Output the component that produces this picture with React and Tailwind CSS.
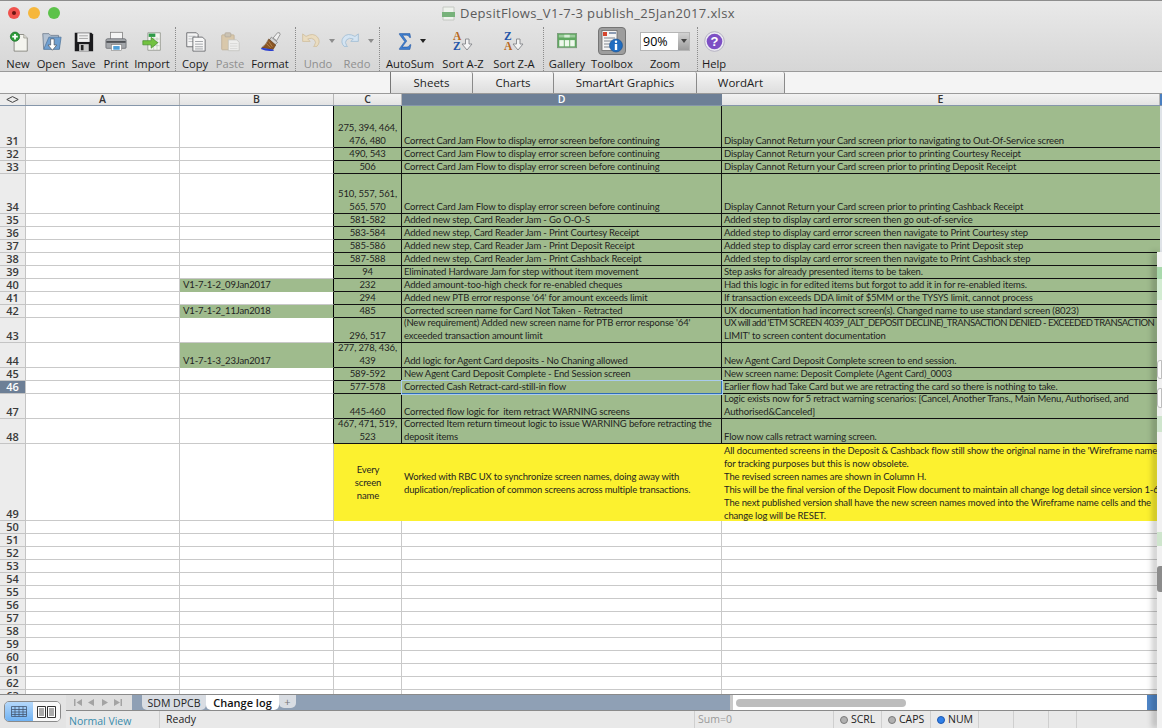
import React from "react";

const NewIcon = () => (
  <svg width="21" height="21" viewBox="0 0 24 24">
    <path d="M7 4h11l4 4v15H7z" fill="#f4f4ee" stroke="#77776f" strokeWidth=".9" />
    <path d="M18 4v4h4" fill="#dcdcd4" stroke="#88887f" strokeWidth=".7" />
    <circle cx="8" cy="6.500" r="5.300" fill="#2b9a38" stroke="#1d6f2a" strokeWidth=".8" />
    <path d="M8 3.300v6.400M4.800 6.500h6.400" stroke="#fff" strokeWidth="2" />
  </svg>
);
const OpenIcon = () => (
  <svg width="21" height="21" viewBox="0 0 24 24">
    <path d="M2 3h7l2 2h9l1 15H3z" fill="#b4c2d2" stroke="#5f6f82" strokeWidth=".8" />
    <path d="M9 7h14l-2 14H3z" fill="#6f9fd0" stroke="#41688f" strokeWidth=".7" />
    <path d="M11 9h4v7h3l-5 6-5-6h3z" fill="#fff" stroke="#50555c" strokeWidth=".8" />
  </svg>
);
const SaveIcon = () => (
  <svg width="21" height="21" viewBox="0 0 24 24">
    <path d="M2 2h19l2 2v19H2z" fill="#1a1a1d" />
    <rect x="5" y="2.500" width="14" height="10" fill="#f1f1f1" />
    <path d="M7 5.500h10M7 8.500h10" stroke="#9a9a9a" strokeWidth="1" />
    <rect x="7" y="15" width="11" height="8" fill="#c8c8c8" />
    <rect x="9" y="16" width="3" height="6" fill="#222" />
  </svg>
);
const PrintIcon = () => (
  <svg width="22" height="22" viewBox="0 0 24 24">
    <rect x="6" y="2.500" width="13" height="8" fill="#f5f5f5" stroke="#777" strokeWidth=".8" />
    <path d="M3 9.500h18a2 2 0 0 1 2 1.500v8a1 1 0 0 1-1 1H2a1 1 0 0 1-1-1v-8a2 2 0 0 1 2-1.500z" fill="#a3a6aa" stroke="#63666b" strokeWidth=".8" />
    <rect x="1.500" y="12" width="21" height="2" fill="#4d5054" />
    <rect x="7" y="16" width="11" height="6.500" fill="#fff" stroke="#777" strokeWidth=".6" />
    <rect x="9" y="17.500" width="7" height="4" fill="#4f9fd8" />
  </svg>
);
const ImportIcon = () => (
  <svg width="20" height="21" viewBox="0 0 24 24">
    <path d="M7 1.500h15v21H7z" fill="#f5f6f0" stroke="#7d8277" strokeWidth=".8" />
    <rect x="8" y="2.500" width="8" height="4" fill="#2f9a48" />
    <path d="M10 9h11M10 13h11M10 17h11M14 7v15M18 7v15" stroke="#a9b6a4" strokeWidth=".6" />
    <path d="M1 11h10V7l8 6.500-8 6.500v-4H1z" fill="#73c23f" stroke="#3e8a25" strokeWidth=".8" />
  </svg>
);
const CopyIcon = () => (
  <svg width="21" height="21" viewBox="0 0 24 24">
    <path d="M2 2h11l2 2v14H2z" fill="#f4f4f4" stroke="#55585c" strokeWidth=".9" />
    <path d="M4 6h8M4 9h8M4 12h8" stroke="#a5a8ac" strokeWidth=".8" />
    <path d="M9 7h11l3 3v13H9z" fill="#f7f7f7" stroke="#55585c" strokeWidth=".9" />
    <path d="M11.500 12h9M11.500 15h9M11.500 18h9M11.500 20.500h9" stroke="#8e9196" strokeWidth=".9" />
  </svg>
);
const PasteIcon = () => (
  <svg width="20" height="21" viewBox="0 0 24 24">
    <rect x="2" y="4" width="15" height="18" rx="1" fill="#d9c8ab" stroke="#b9a98f" strokeWidth=".8" />
    <rect x="6" y="1.500" width="7" height="5" rx="1" fill="#cbc3b4" stroke="#aaa294" strokeWidth=".7" />
    <path d="M10 10h10l3 3v10H10z" fill="#eeeeec" stroke="#bcbcb8" strokeWidth=".8" />
    <path d="M12 14.500h9M12 17.500h9M12 20.500h9" stroke="#cfcfcb" strokeWidth=".8" />
  </svg>
);
const BrushIcon = () => (
  <svg width="21" height="21" viewBox="0 0 24 24">
    <path d="M15 8l5-6q3-1 3 2l-4 7z" fill="#eeeeee" stroke="#777" strokeWidth=".8" />
    <path d="M13 7l7 6-3 3-6-6z" fill="#d5d5d5" stroke="#666" strokeWidth=".7" />
    <path d="M10 9l8 7-3 5-13-2q5-3 8-10z" fill="#8a5524" stroke="#5d3812" strokeWidth=".6" />
    <path d="M2 19l13 2 1 1.500q-8 1.500-15-2z" fill="#2b3fd0" />
    <path d="M7 14l5 5M10 12l4 6" stroke="#c59a5e" strokeWidth=".8" />
  </svg>
);
const UndoIcon = ({ flip, color, edge }) => (
  <svg width="20" height="16" viewBox="0 0 24 19" style={flip ? { transform: "scaleX(-1)" } : undefined}>
    <path d="M2 1v9h9L8 7q5-2 8 1 3 3 0 7l-1 1h4q5-5 1-11-5-6-14-1z" fill={color} stroke={edge} strokeWidth=".9" />
  </svg>
);
const Sigma = () => (
  <svg width="14" height="19" viewBox="0 0 20 24" preserveAspectRatio="none">
    <path d="M2 2h15l1 5h-1.500q-1-3-4-3H6.500l6 7.500L6 19h7q3 0 4-3h1.500L17 22H2v-1l7.500-9L2 3z" fill="#3f7fd0" stroke="#1c4f9c" strokeWidth=".7" />
  </svg>
);
const SortIcon = ({ top, bottom, topColor, bottomColor }) => (
  <svg width="22" height="20" viewBox="0 0 22 20" className="overflow-visible">
    <text x="1" y="8.500" fontFamily="'Liberation Serif',serif" fontWeight="700" fontSize="11.500" fill={topColor}>{top}</text>
    <text x="1" y="19" fontFamily="'Liberation Serif',serif" fontWeight="700" fontSize="11.500" fill={bottomColor}>{bottom}</text>
    <path d="M13.500 8h3.500v5h3l-5 6-5-6h3.500z" fill="#f4f4f4" stroke="#85878a" strokeWidth=".9" />
  </svg>
);
const GalleryIcon = () => (
  <svg width="20" height="16" viewBox="0 0 22 18" preserveAspectRatio="none">
    <rect x=".5" y=".5" width="21" height="16" fill="#5fa860" stroke="#7b9b7b" />
    <rect x="2" y="2" width="18" height="3" fill="#9ccb9c" />
    <rect x="8" y="2" width="6" height="3" fill="#d8edd8" />
    <rect x="2.500" y="8" width="5" height="7" fill="#eef8ec" />
    <rect x="8.500" y="8" width="5" height="7" fill="#eef8ec" />
    <rect x="14.500" y="8" width="5" height="7" fill="#eef8ec" />
  </svg>
);
const ToolboxIcon = () => (
  <svg width="22" height="23" viewBox="0 0 22 23">
    <rect x="1" y=".5" width="15" height="20" fill="#f4f4f4" stroke="#6b6b6b" strokeWidth=".8" />
    <rect x="2" y="2" width="4" height="4" fill="#d6452e" />
    <rect x="8" y="2" width="7" height="2" fill="#8c9cb4" />
    <path d="M3 8h11M3 11h8M3 14h8M3 17h8" stroke="#80868e" strokeWidth="1.200" />
    <circle cx="15" cy="15.500" r="6.500" fill="#1f6cc0" stroke="#144d8f" strokeWidth=".6" />
    <circle cx="15" cy="11.800" r="1.200" fill="#fff" />
    <rect x="13.800" y="14" width="2.400" height="6" fill="#fff" />
  </svg>
);
const HelpIcon = () => (
  <svg width="21" height="21" viewBox="0 0 21 21">
    <circle cx="10.500" cy="10.500" r="9.800" fill="#ecebf2" stroke="#a8a5b8" strokeWidth=".8" />
    <circle cx="10.500" cy="10.500" r="7.800" fill="#7d4fc4" />
    <text x="10.500" y="15.300" textAnchor="middle" fontFamily="'Liberation Sans',sans-serif" fontWeight="700" fontSize="13" fill="#fff">?</text>
  </svg>
);
const Caret = ({ className }) => (
  <span className={`w-0 h-0 border-x-[3px] border-x-transparent border-t-[4px] ${className}`} />
);

const Sep = () => <div className="w-[6px] h-[44px] flex justify-center"><div className="border-l border-dotted border-[#8b8b8b]" /></div>;

const Label = ({ dim, children }) => (
  <span className={`mt-[2px] text-[11.2px] leading-[14px] whitespace-nowrap ${dim ? "text-[#8f8f8f]" : "text-[#1b1b1b]"}`}>{children}</span>
);

const Tool = ({ w, label, dim, children }) => (
  <div className={`${w} h-[44px] flex flex-col items-center shrink-0`}>
    <div className="h-[28px] flex items-center justify-center">{children}</div>
    <Label dim={dim}>{label}</Label>
  </div>
);

const Toolbar = () => (
  <div className="h-[72px] shrink-0 bg-gradient-to-b from-[#e9e9e9] to-[#d6d6d6] border-t border-[#8d8d8d] border-b border-b-[#9a9a9a] flex flex-col font-['Open_Sans',sans-serif]">
    <div className="h-[24px] flex items-center shrink-0">
      <div className="flex gap-[8px] pl-[8px]">
        <span className="w-3 h-3 rounded-full bg-[#f0524d] flex items-center justify-center"><span className="w-1 h-1 rounded-full bg-[#6b1512]" /></span>
        <span className="w-3 h-3 rounded-full bg-[#f6b73c]" />
        <span className="w-3 h-3 rounded-full bg-[#5cc24a]" />
      </div>
      <div className="flex-1 flex items-center justify-center gap-[4px] pr-[46px]">
        <svg width="15" height="15" viewBox="0 0 15 15"><path d="M2 1h11v13H2z" fill="#eef2ec" stroke="#c4c8c2" /><rect x="1" y="6" width="13" height="5" fill="#77b27a" /></svg>
        <span className="text-[13px] leading-4 text-[#5b5b5b] tracking-[0.35px]">DepsitFlows_V1-7-3 publish_25Jan2017.xlsx</span>
      </div>
    </div>
    <div className="flex items-start pl-px pt-[2px]">
      <Tool w="w-[34px]" label="New"><NewIcon /></Tool>
      <Tool w="w-[32px]" label="Open"><OpenIcon /></Tool>
      <Tool w="w-[33px]" label="Save"><SaveIcon /></Tool>
      <Tool w="w-[32px]" label="Print"><PrintIcon /></Tool>
      <Tool w="w-[40px]" label="Import"><ImportIcon /></Tool>
      <Sep />
      <Tool w="w-[34px]" label="Copy"><CopyIcon /></Tool>
      <Tool w="w-[36px]" label="Paste" dim><PasteIcon /></Tool>
      <Tool w="w-[44px]" label="Format"><BrushIcon /></Tool>
      <Sep />
      <Tool w="w-[40px]" label="Undo" dim>
        <div className="flex items-center gap-[8px]"><UndoIcon color="#eadcc0" edge="#cdbb98" /><Caret className="border-t-[#8d8d8d]" /></div>
      </Tool>
      <Tool w="w-[38px]" label="Redo" dim>
        <div className="flex items-center gap-[8px]"><UndoIcon flip color="#d4e4f2" edge="#9bb9d2" /><Caret className="border-t-[#8d8d8d]" /></div>
      </Tool>
      <Sep />
      <Tool w="w-[56px]" label="AutoSum">
        <div className="flex items-center gap-[8px] ml-[4px]"><Sigma /><Caret className="border-t-[#222]" /></div>
      </Tool>
      <Tool w="w-[50px]" label="Sort A-Z"><SortIcon top="A" bottom="Z" topColor="#b8691d" bottomColor="#2455a8" /></Tool>
      <Tool w="w-[52px]" label="Sort Z-A"><SortIcon top="Z" bottom="A" topColor="#2455a8" bottomColor="#b8691d" /></Tool>
      <Sep />
      <Tool w="w-[42px]" label="Gallery"><GalleryIcon /></Tool>
      <div className="w-[48px] h-[44px] flex flex-col items-center shrink-0">
        <div className="w-[28px] h-[28px] rounded-[4px] bg-[#9d9d9d] border border-[#757575] flex items-center justify-center"><ToolboxIcon /></div>
        <Label>Toolbox</Label>
      </div>
      <div className="w-[58px] h-[44px] flex flex-col items-center shrink-0">
        <div className="h-[28px] flex items-center">
          <div className="w-[50px] h-[19px] flex border border-[#b5b5b5]">
            <span className="w-[37px] bg-white text-[12.5px] leading-[17px] pl-[2px] text-black">90%</span>
            <span className="flex-1 bg-gradient-to-b from-[#d2d2d2] to-[#9d9d9d] flex items-center justify-center"><Caret className="border-t-[#444]" /></span>
          </div>
        </div>
        <Label>Zoom</Label>
      </div>
      <Sep />
      <Tool w="w-[28px]" label="Help"><HelpIcon /></Tool>
    </div>
  </div>
);

const RibbonTab = ({ w, label }) => (
  <div className={`${w} h-full border-r border-[#8a8a8a] bg-gradient-to-b from-[#f6f6f6] via-[#e9e9e9] to-[#dedede] flex items-center justify-center pt-[1px] text-[11.5px] text-[#1d1d1d] shrink-0 rounded-t-[2px]`}>{label}</div>
);

const Ribbon = () => (
  <div className="h-[22px] flex bg-[#f4f4f4] font-['Open_Sans',sans-serif] border-b border-[#9a9a9a] shrink-0">
    <div className="w-[391px] shrink-0 border-r border-[#777]" />
    <RibbonTab w="w-[82px]" label="Sheets" />
    <RibbonTab w="w-[81px]" label="Charts" />
    <RibbonTab w="w-[143px]" label="SmartArt Graphics" />
    <RibbonTab w="w-[88px]" label="WordArt" />
  </div>
);

const ColHead = ({ w, label, on }) => (
  <div className={`${w} shrink-0 h-full flex items-center justify-center text-[10.5px] leading-[11px] font-semibold border-r ${on ? "bg-[#6d7f96] text-white border-[#6d7f96]" : "bg-gradient-to-b from-[#f2f2f2] to-[#e3e3e3] text-[#333] border-[#b6b6b6]"}`}>{label}</div>
);

const ColumnHeader = () => (
  <div className="h-[12px] flex shrink-0 border-b border-[#8596aa] font-['Open_Sans',sans-serif]">
    <div className="w-[26px] shrink-0 h-full bg-[#ececec] border-r border-[#b6b6b6] flex items-center justify-center">
      <svg width="13" height="7" viewBox="0 0 13 7"><path d="M.8 3.500 6.500.6l5.700 2.900-5.700 2.900z" fill="none" stroke="#444" strokeWidth="1" /></svg>
    </div>
    <ColHead w="w-[154px]" label="A" />
    <ColHead w="w-[154px]" label="B" />
    <ColHead w="w-[68px]" label="C" />
    <ColHead w="w-[320px]" label="D" on />
    <ColHead w="w-[438px]" label="E" />
    <div className="flex-1 bg-[#4a7fc0]" />
  </div>
);

const rows = [
  ["31", "h-[42px]", "", "275, 394, 464,\n476, 480", "Correct Card Jam Flow to display error screen before continuing", "Display Cannot Return your Card screen prior to navigating to Out-Of-Service screen"],
  ["32", "h-[13px]", "", "490, 543", "Correct Card Jam Flow to display error screen before continuing", "Display Cannot Return your Card screen prior to printing Courtesy Receipt"],
  ["33", "h-[13px]", "", "506", "Correct Card Jam Flow to display error screen before continuing", "Display Cannot Return your Card screen prior to printing Deposit Receipt"],
  ["34", "h-[40px]", "", "510, 557, 561,\n565, 570", "Correct Card Jam Flow to display error screen before continuing", "Display Cannot Return your Card screen prior to printing Cashback Receipt"],
  ["35", "h-[13px]", "", "581-582", "Added new step, Card Reader Jam - Go O-O-S", "Added step to display card error screen then go out-of-service"],
  ["36", "h-[13px]", "", "583-584", "Added new step, Card Reader Jam - Print Courtesy Receipt", "Added step to display card error screen then navigate to Print Courtesy step"],
  ["37", "h-[13px]", "", "585-586", "Added new step, Card Reader Jam - Print Deposit Receipt", "Added step to display card error screen then navigate to Print Deposit step"],
  ["38", "h-[13px]", "", "587-588", "Added new step, Card Reader Jam - Print Cashback Receipt", "Added step to display card error screen then navigate to Print Cashback step"],
  ["39", "h-[13px]", "", "94", "Eliminated Hardware Jam for step without item movement", "Step asks for already presented items to be taken."],
  ["40", "h-[13px]", "V1-7-1-2_09Jan2017", "232", "Added amount-too-high check for re-enabled cheques", "Had this logic in for edited items but forgot to add it in for re-enabled items."],
  ["41", "h-[13px]", "", "294", "Added new PTB error response '64' for amount exceeds limit", "If transaction exceeds DDA limit of $5MM or the TYSYS limit, cannot process"],
  ["42", "h-[13px]", "V1-7-1-2_11Jan2018", "485", "Corrected screen name for Card Not Taken - Retracted", "UX documentation had incorrect screen(s). Changed name to use standard screen (8023)"],
  ["43", "h-[25px]", "", "296, 517", "(New requirement) Added new screen name for PTB error response '64'\nexceeded transaction amount limit", <><span className="tracking-[-0.52px]">UX will add 'ETM SCREEN 4039_(ALT_DEPOSIT DECLINE)_TRANSACTION DENIED - EXCEEDED TRANSACTION</span>{"\nLIMIT' to screen content documentation"}</>],
  ["44", "h-[25px]", "V1-7-1-3_23Jan2017", "277, 278, 436,\n439", "Add logic for Agent Card deposits - No Chaning allowed", "New Agent Card Deposit Complete screen to end session."],
  ["45", "h-[13px]", "", "589-592", "New Agent Card Deposit Complete - End Session screen", "New screen name: Deposit Complete (Agent Card)_0003"],
  ["46", "h-[13px]", "", "577-578", "Corrected Cash Retract-card-still-in flow", "Earlier flow had Take Card but we are retracting the card so there is nothing to take."],
  ["47", "h-[25px]", "", "445-460", "Corrected flow logic for  item retract WARNING screens", "Logic exists now for 5 retract warning scenarios: [Cancel, Another Trans., Main Menu, Authorised, and\nAuthorised&Canceled]"],
  ["48", "h-[25px]", "", "467, 471, 519,\n523", "Corrected Item return timeout logic to issue WARNING before retracting the\ndeposit items", "Flow now calls retract warning screen."],
];

const RowNum = ({ n, on }) => (
  <div className={`w-[26px] shrink-0 h-full flex items-end justify-center text-[11px] leading-[13px] tracking-normal font-semibold font-['Open_Sans',sans-serif] border-r border-b border-[#c4c4c4] ${on ? "bg-[#6d7f96] text-white" : "bg-[#ececec] text-[#3a3a3a]"}`}>{n}</div>
);

const cellBase = "shrink-0 h-full whitespace-pre overflow-hidden border-r border-b flex items-end";
const textStyle = "text-[9.5px] leading-[13px] tracking-[-0.15px] text-[#1f1f1f]";
const Strip = () => <div className="flex-1 h-full bg-[#dfe3e8]" />;

const DataRow = ({ r }) => {
  const [n, h, b, c, d, e] = r;
  const sel = n === "46";
  return (
    <div className={`${h} flex shrink-0 ${textStyle}`}>
      <RowNum n={n} on={sel} />
      <div className={`${cellBase} w-[154px] border-[#c9c9c9]`} />
      <div className={`${cellBase} w-[154px] pl-[3px] border-r-black ${b ? "bg-[#9fbb8d] border-b-[#9fbb8d]" : "border-b-[#c9c9c9]"}`}>{b}</div>
      <div className={`${cellBase} w-[68px] justify-center text-center bg-[#9fbb8d] border-[#111]`}>{c}</div>
      {sel ? (
        <div className={`${cellBase} w-[320px] pl-[2px] bg-[#9fbb8d] border-[#2f6cb8] outline outline-[1px] outline-[#a9cbef] relative`}>{d}</div>
      ) : (
        <div className={`${cellBase} w-[320px] pl-[2px] bg-[#9fbb8d] border-[#111]`}>{d}</div>
      )}
      <div className={`${cellBase} w-[438px] pl-[2px] bg-[#9fbb8d] border-b-[#111] border-r-0`}><div>{e}</div></div>
      <Strip />
    </div>
  );
};

const Sheet = () => (
  <div className="flex-1 min-h-0 overflow-hidden font-['Lato',sans-serif] flex flex-col bg-white">
    {rows.map((r) => <DataRow key={r[0]} r={r} />)}
    <div className={`h-[77px] flex shrink-0 ${textStyle}`}>
      <RowNum n="49" />
      <div className="w-[154px] shrink-0 border-r border-b border-[#c9c9c9]" />
      <div className="w-[154px] shrink-0 border-r border-b border-[#c9c9c9]" />
      <div className="w-[68px] shrink-0 bg-[#fcf12f] flex items-center justify-center text-center whitespace-pre">{"Every\nscreen\nname"}</div>
      <div className="w-[320px] shrink-0 bg-[#fcf12f] flex items-center pl-[2px] whitespace-pre">{"Worked with RBC UX to synchronize screen names, doing away with\nduplication/replication of common screens across multiple transactions."}</div>
      <div className="w-[438px] shrink-0 bg-[#fcf12f] pl-[2px] whitespace-pre overflow-hidden">{"All documented screens in the Deposit & Cashback flow still show the original name in the 'Wireframe name' column\nfor tracking purposes but this is now obsolete.\nThe revised screen names are shown in Column H.\nThis will be the final version of the Deposit Flow document to maintain all change log detail since version 1-6\nThe next published version shall have the new screen names moved into the Wireframe name cells and the\nchange log will be RESET."}</div>
    </div>
    {["50","51","52","53","54","55","56","57","58","59","60","61","62","63"].map((n) => (
      <div key={n} className="h-[13px] flex shrink-0">
        <RowNum n={n} />
        <div className="w-[154px] shrink-0 border-r border-b border-[#c9c9c9]" />
        <div className="w-[154px] shrink-0 border-r border-b border-[#c9c9c9]" />
        <div className="w-[68px] shrink-0 border-r border-b border-[#c9c9c9]" />
        <div className="w-[320px] shrink-0 border-r border-b border-[#c9c9c9]" />
        <div className="w-[438px] shrink-0 border-b border-[#c9c9c9]" />
      </div>
    ))}
  </div>
);

const StatusCell = ({ w, children, className = "" }) => (
  <div className={`${w} shrink-0 h-full border-r border-[#cfcfcf] flex items-center ${className}`}>{children}</div>
);
const Led = ({ on }) => (
  <span className={`w-[8px] h-[8px] rounded-full mr-[3px] border ${on ? "bg-[#2f7fe8] border-[#1c57b0]" : "bg-[#b0b0b0] border-[#7a7a7a]"}`} />
);

const Bottom = () => (
  <div className="h-[34px] shrink-0 flex bg-[#e9e9e9] font-['Open_Sans',sans-serif] border-t border-[#8a8a8a]">
    <div className="w-[66px] shrink-0 flex items-center pl-[4px] bg-[#e4e4e4]">
      <div className="w-[57px] h-[21px] flex rounded-[5px] border border-[#8a8a8a] overflow-hidden">
        <div className="w-[28px] bg-gradient-to-b from-[#b5d8fa] to-[#6fb2f3] flex items-center justify-center">
          <svg width="16" height="11" viewBox="0 0 16 11"><path d="M.5.5h15v10H.5zM.5 3.500h15M.5 6h15M.5 8.500h15M4 .5v10M8 .5v10M12 .5v10" fill="none" stroke="#44556e" strokeWidth=".8" /></svg>
        </div>
        <div className="flex-1 bg-[#f8f8f8] flex items-center justify-center gap-[1px]">
          <svg width="9" height="12" viewBox="0 0 9 12"><path d="M.5.5h8v11h-8z" fill="#fff" stroke="#333" /><path d="M2 3h5M2 5h5M2 7h5M2 9h5" stroke="#555" /></svg>
          <svg width="9" height="12" viewBox="0 0 9 12"><path d="M.5.5h8v11h-8z" fill="#fff" stroke="#333" /><path d="M2 3h5M2 5h5M2 7h5M2 9h5" stroke="#555" /></svg>
        </div>
      </div>
    </div>
    <div className="flex-1 min-w-0 flex flex-col">
      <div className="h-[16px] flex shrink-0 border-b border-[#8a8a8a]">
        <div className="w-[66px] shrink-0 bg-[#dedede] flex items-center gap-[5px] pl-[7px] text-[#9a9a9a]">
          <svg width="50" height="9" viewBox="0 0 50 9" fill="#a3a3a3"><path d="M1 1h1.500v7H1zM9 1v7L3.500 4.500zM21 1v7l-6-3.500zM29 1v7l6-3.500zM41 1v7l6-3.500zM47.500 1H49v7h-1.500z" /></svg>
        </div>
        <div className="w-[598px] shrink-0 bg-[#8fa0b5] flex items-start pl-[10px]">
          <div className="w-[64px] h-[15px] bg-[#d9dde3] rounded-b-[5px] text-[10.5px] leading-[14px] text-[#222] flex items-center justify-center">SDM DPCB</div>
          <div className="w-[73px] h-[15px] bg-white rounded-b-[5px] text-[11px] leading-[14px] font-semibold text-[#111] flex items-center justify-center">Change log</div>
          <div className="w-[17px] h-[13px] bg-[#d9dde3] rounded-b-[5px] text-[11px] leading-[12px] text-[#777] flex items-center justify-center">+</div>
        </div>
        <div className="flex-1 bg-white flex items-center pl-[3px] border-l-[3px] border-[#c9c9c9]">
          <div className="w-[170px] h-[8px] rounded-full bg-[#bdbdbd]" />
          <div className="flex-1" />
          <div className="w-[10px] h-full bg-[#4f86c8] mr-[5px]" />
        </div>
      </div>
      <div className="flex-1 flex text-[10.5px] text-[#222]">
        <StatusCell w="w-[94px]" className="items-end pl-[3px]"><span className="text-[#3a8cad] leading-[14px] text-[10.5px]">Normal View</span></StatusCell>
        <StatusCell w="w-[535px]" className="pl-[6px]">Ready</StatusCell>
        <StatusCell w="w-[139px]" className="pl-[3px] text-[#9a9a9a]">Sum=0</StatusCell>
        <StatusCell w="w-[48px]" className="pl-[6px]"><Led />SCRL</StatusCell>
        <StatusCell w="w-[49px]" className="pl-[6px]"><Led />CAPS</StatusCell>
        <StatusCell w="w-[48px]" className="pl-[6px]"><Led on />NUM</StatusCell>
        <StatusCell w="w-[35px]" />
        <StatusCell w="w-[35px]" />
        <StatusCell w="w-[28px]" />
        <div className="flex-1" />
      </div>
    </div>
  </div>
);

const SideWindow = () => (
  <div className="absolute left-[1157px] top-[252px] w-[5px] h-[476px] bg-[#f1f1f1] shadow-[-4px_0_6px_rgba(0,0,0,0.28)] flex flex-col z-10">
    <div className="h-[15px] shrink-0 bg-[#f4f4f4]" />
    <div className="h-[12px] shrink-0 bg-[#a9d9ac]" />
    <div className="h-[21px] shrink-0 bg-[#d3ecd2]" />
    <div className="h-[60px] shrink-0" />
    <div className="h-[19px] shrink-0 bg-[#fafafa] border border-[#bdbdbd] rounded-l-[3px]" />
    <div className="h-[9px] shrink-0" />
    <div className="h-[20px] shrink-0 bg-[#fafafa] border border-[#bdbdbd] rounded-l-[3px]" />
    <div className="h-[8px] shrink-0" />
    <div className="h-[16px] shrink-0 bg-[#cfe5cd]" />
    <div className="h-[100px] shrink-0" />
    <div className="h-[14px] shrink-0 bg-[#cfe5cd]" />
    <div className="h-[20px] shrink-0" />
    <div className="h-[26px] shrink-0 bg-[#8c8c8c] rounded-l-[3px]" />
  </div>
);

export default function App() {
  return (
    <div className="w-[1162px] h-[728px] relative overflow-hidden bg-white flex flex-col">
      <Toolbar />
      <Ribbon />
      <ColumnHeader />
      <Sheet />
      <Bottom />
      <SideWindow />
    </div>
  );
}
